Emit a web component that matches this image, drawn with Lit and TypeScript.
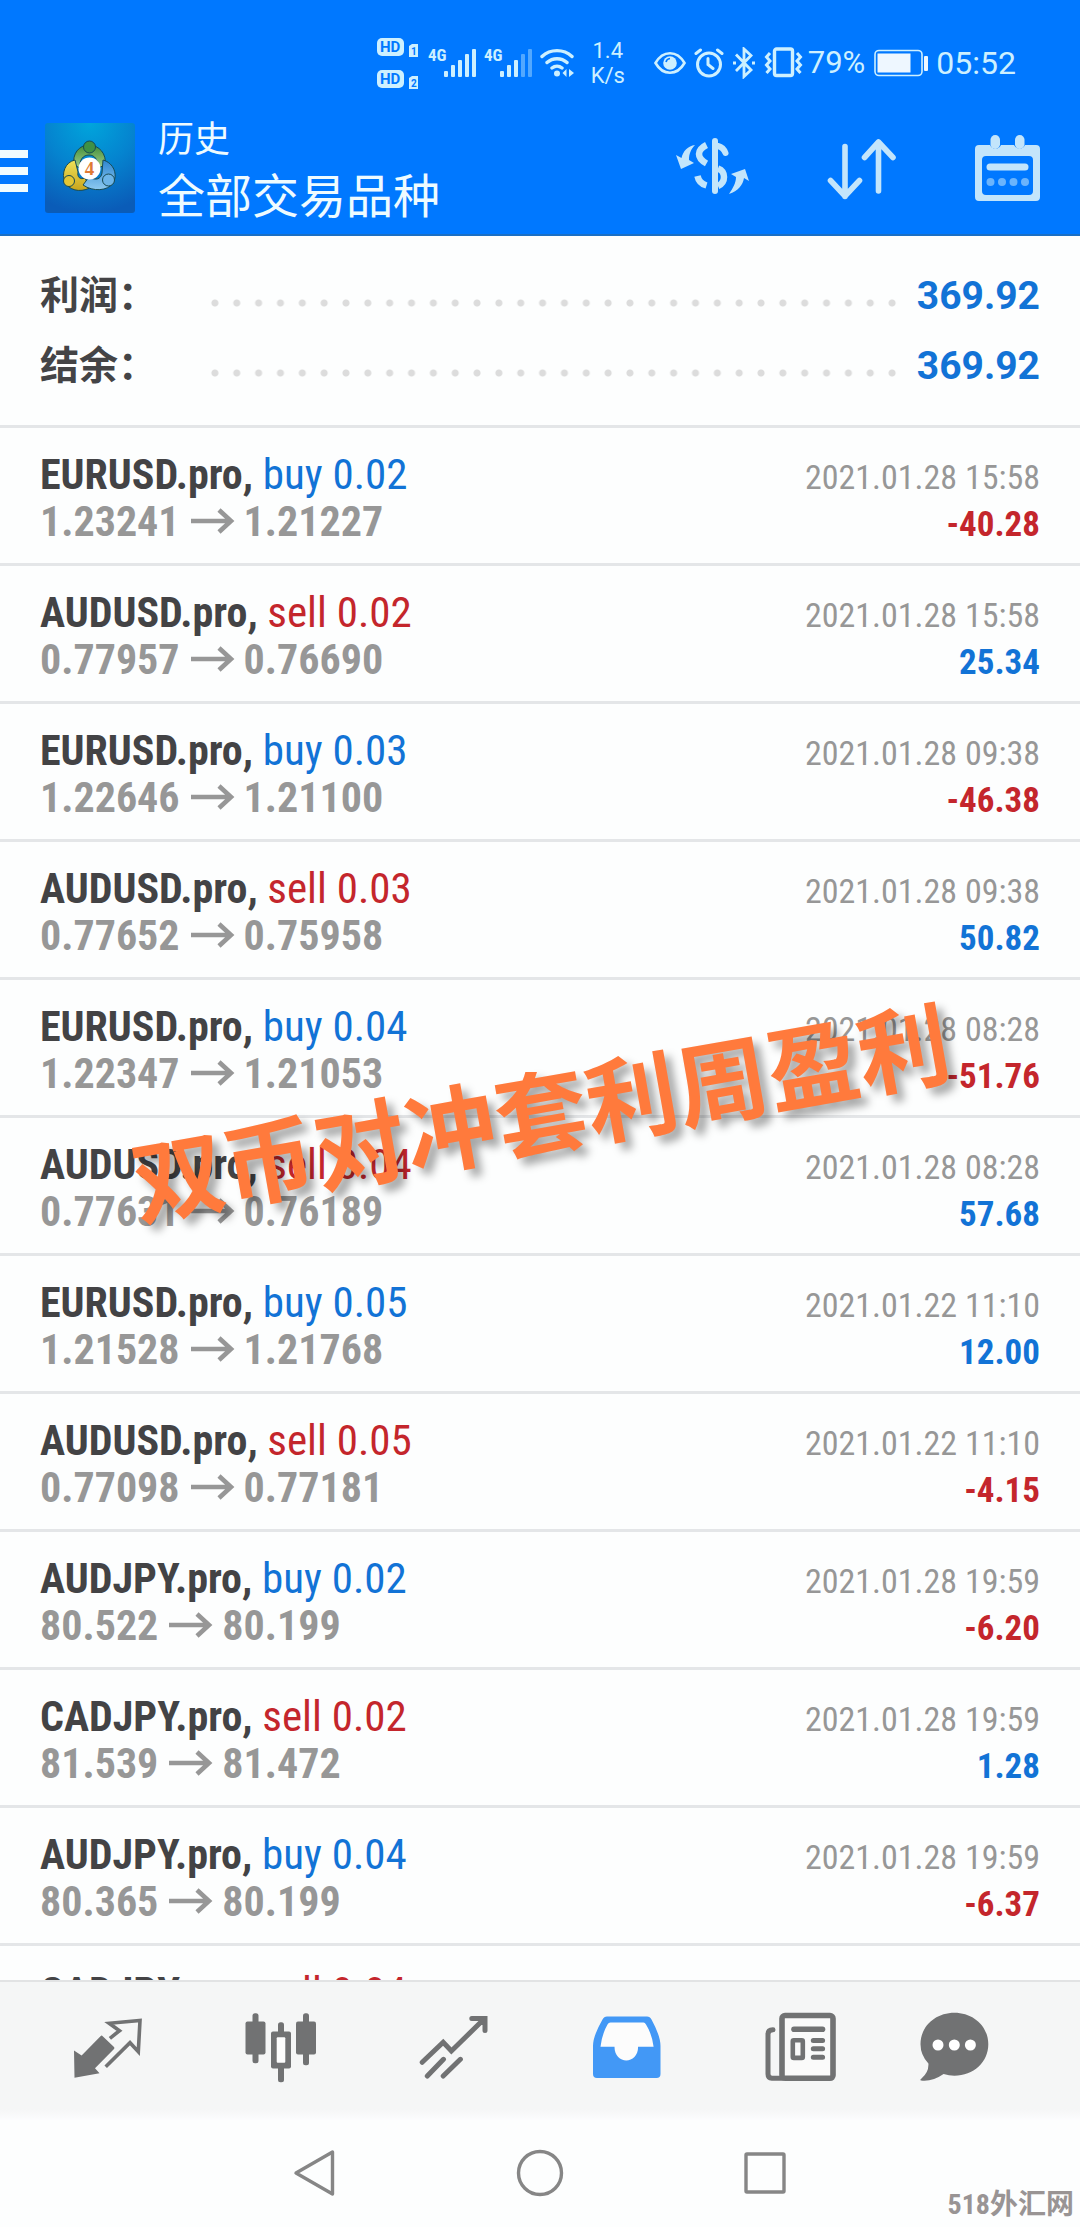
import { LitElement, html, css, svg, nothing } from "lit";
import { customElement, property } from "lit/decorators.js";
import { classMap } from "lit/directives/class-map.js";

type Side = "buy" | "sell";

interface Deal {
  symbol: string;
  side: Side;
  volume: string;
  open: string;
  close: string;
  time: string;
  profit: string;
}

const deal = (
  symbol: string,
  side: Side,
  volume: string,
  open: string,
  close: string,
  time: string,
  profit: string
): Deal => ({ symbol, side, volume, open, close, time, profit });

const DEALS: Deal[] = [
  deal("EURUSD.pro", "buy", "0.02", "1.23241", "1.21227", "2021.01.28 15:58", "-40.28"),
  deal("AUDUSD.pro", "sell", "0.02", "0.77957", "0.76690", "2021.01.28 15:58", "25.34"),
  deal("EURUSD.pro", "buy", "0.03", "1.22646", "1.21100", "2021.01.28 09:38", "-46.38"),
  deal("AUDUSD.pro", "sell", "0.03", "0.77652", "0.75958", "2021.01.28 09:38", "50.82"),
  deal("EURUSD.pro", "buy", "0.04", "1.22347", "1.21053", "2021.01.28 08:28", "-51.76"),
  deal("AUDUSD.pro", "sell", "0.04", "0.77631", "0.76189", "2021.01.28 08:28", "57.68"),
  deal("EURUSD.pro", "buy", "0.05", "1.21528", "1.21768", "2021.01.22 11:10", "12.00"),
  deal("AUDUSD.pro", "sell", "0.05", "0.77098", "0.77181", "2021.01.22 11:10", "-4.15"),
  deal("AUDJPY.pro", "buy", "0.02", "80.522", "80.199", "2021.01.28 19:59", "-6.20"),
  deal("CADJPY.pro", "sell", "0.02", "81.539", "81.472", "2021.01.28 19:59", "1.28"),
  deal("AUDJPY.pro", "buy", "0.04", "80.365", "80.199", "2021.01.28 19:59", "-6.37"),
  deal("CADJPY.pro", "sell", "0.04", "", "", "2021.01.28 19:58", ""),
];

@customElement("status-bar")
export class StatusBar extends LitElement {
  static styles = css`
    :host {
      display: flex;
      align-items: center;
      justify-content: flex-end;
      min-height: 78px;
      padding: 24px 64px 0 16px;
      color: #cdf0ff;
      font-family: Roboto, "Liberation Sans", sans-serif;
    }
    svg {
      display: block;
      flex: none;
    }
    .cluster {
      display: flex;
      align-items: center;
      gap: 8px;
    }
    .speed {
      display: flex;
      flex-direction: column;
      align-items: center;
      width: 32px;
      margin: 0 30px 0 17px;
      font-size: 22px;
      line-height: 25px;
    }
    .battery-level {
      margin: 0 9px 0 5px;
      font-size: 31px;
      line-height: 36px;
    }
    .clock {
      margin-left: 8px;
      font-size: 32px;
      line-height: 36px;
    }
    .badge-text {
      font: 700 15px Roboto, sans-serif;
      fill: #0078ff;
    }
    .badge-num {
      font: 700 10px Roboto, sans-serif;
      fill: #0078ff;
    }
    .net-text {
      font: 700 17px "Roboto Condensed", Roboto, sans-serif;
      fill: currentColor;
    }
  `;

  private hd(y: number, n: string) {
    return svg`
      <rect x="1" y=${y} width="27" height="18" rx="5" fill="currentColor"/>
      <text class="badge-text" x="4" y=${y + 14}>HD</text>
      <path d=${`M33 ${y + 8}l3-2h6v13h-9z`} fill="currentColor"/>
      <text class="badge-num" x="35" y=${y + 17}>${n}</text>`;
  }

  private signal(strength: number) {
    return html`<svg width="48" height="36" viewBox="0 -2 48 36" aria-hidden="true">
      <text class="net-text" x="0" y="14">4G</text>
      ${[6, 12, 17, 23, 28].map(
        (h, i) => svg`<rect x=${16 + i * 7} y=${30 - h} width="4" height=${h} rx="1"
          fill="currentColor" opacity=${i < strength ? 1 : 0.4}/>`
      )}
    </svg>`;
  }

  render() {
    return html`
      <div class="cluster">
        <svg width="44" height="54" viewBox="0 0 44 54" aria-hidden="true">
          ${this.hd(2, "1")} ${this.hd(34, "2")}
        </svg>
        ${this.signal(5)} ${this.signal(3)}
        <svg width="35" height="32" viewBox="0 0 35 32" fill="none" stroke="currentColor" stroke-width="3.4" stroke-linecap="round" aria-hidden="true">
          <path d="M2 9.500a22 22 0 0 1 30 0M7 15.500a15 15 0 0 1 20 0M12 21a8 8 0 0 1 10 0"/>
          <circle cx="17" cy="26.500" r="3" fill="currentColor" stroke="none"/>
          <path d="M26.500 22v8l-4-4zM29 22v8l5-4z" fill="currentColor" stroke="none"/>
        </svg>
      </div>
      <div class="speed"><span>1.4</span><span>K/s</span></div>
      <div class="cluster">
        <svg width="32" height="32" viewBox="0 0 32 32" fill="none" stroke="currentColor" stroke-width="2.600" aria-hidden="true">
          <path d="M1.500 16C9 3 23 3 30.500 16C23 29 9 29 1.500 16z"/>
          <circle cx="16" cy="16" r="6.800" fill="currentColor" stroke="none"/>
          <path d="M12 15a4.500 4.500 0 0 1 4-3.500" stroke="#0078ff" stroke-width="1.600"/>
        </svg>
        <svg width="30" height="32" viewBox="0 0 30 32" fill="none" stroke="currentColor" stroke-width="3" stroke-linecap="round" aria-hidden="true">
          <circle cx="15" cy="17.500" r="11.500"/>
          <path d="M14 11.500v6l5 4M2 6.500l4.500-3.500M28 6.500L23.500 3"/>
        </svg>
        <svg width="24" height="32" viewBox="0 0 24 32" fill="none" stroke="currentColor" stroke-width="2.800" aria-hidden="true">
          <path d="M4 7.500l15 15.500l-7 6.500V2l7 6.500L4 24"/>
          <path d="M1 16h3M20 16h3" stroke-width="3"/>
        </svg>
        <svg width="39" height="32" viewBox="0 0 39 32" fill="none" stroke="currentColor" aria-hidden="true">
          <rect x="10.500" y="2" width="18" height="26.500" rx="2" stroke-width="3.4"/>
          <path d="M6 6l-3.500 4l3.500 4l-3.500 4l3.500 4l-3.500 4M33 6l3.500 4l-3.500 4l3.500 4l-3.500 4l3.500 4" stroke-width="3"/>
        </svg>
      </div>
      <span class="battery-level">79%</span>
      <svg width="54" height="28" viewBox="0 0 54 28" aria-hidden="true">
        <rect x="1" y="1.500" width="47" height="25" rx="4" fill="none" stroke="currentColor" stroke-width="1.600"/>
        <rect x="3.500" y="4.500" width="33" height="19" fill="#eef7ff"/>
        <rect x="50" y="7" width="4" height="15" rx="1" fill="#eef7ff"/>
      </svg>
      <time class="clock">05:52</time>
    `;
  }
}

@customElement("history-header")
export class HistoryHeader extends LitElement {
  static styles = css`
    :host {
      display: flex;
      align-items: center;
      min-height: 132px;
      padding-right: 40px;
      border-bottom: 2px solid #1b6fc4;
      color: #eefbff;
      font-family: Roboto, "Noto Sans CJK SC", sans-serif;
    }
    svg {
      display: block;
    }
    button {
      flex: none;
      padding: 0;
      border: 0;
      background: none;
      color: #c3e5fb;
    }
    .menu {
      padding-top: 4px;
      color: #f1fcff;
    }
    .logo {
      flex: none;
      margin: 0 23px 0 17px;
    }
    .titles {
      flex: 1;
      min-width: 0;
      padding-top: 8px;
    }
    .caption,
    .title {
      margin: 0;
      font-weight: 400;
    }
    .caption {
      font-size: 36px;
      line-height: 50px;
    }
    .title {
      font-size: 47px;
      line-height: 64px;
    }
    .actions {
      display: flex;
      align-items: center;
      gap: 78px;
    }
    .digit {
      font: 700 19px "Liberation Serif", serif;
      fill: #e07a35;
    }
  `;

  render() {
    return html`
      <button class="menu" aria-label="菜单">
        <svg width="28" height="44" viewBox="0 0 28 44" fill="currentColor">
          <path d="M0 2h28v8H0zM0 19h28v8H0zM0 36h28v8H0z"/>
        </svg>
      </button>
      <svg class="logo" width="90" height="90" viewBox="0 0 90 90" aria-hidden="true">
        <defs>
          <radialGradient id="bg" cx=".5" cy="0" r="1">
            <stop offset="0" stop-color="#00a5dc"/>
            <stop offset=".5" stop-color="#0583cf"/>
            <stop offset="1" stop-color="#0a5cb8"/>
          </radialGradient>
          <linearGradient id="green" x2="0" y2="1">
            <stop offset="0" stop-color="#3f8c3a"/>
            <stop offset="1" stop-color="#a5cf88"/>
          </linearGradient>
          <linearGradient id="gold" x2="0" y2="1">
            <stop offset="0" stop-color="#f0e25a"/>
            <stop offset="1" stop-color="#c9a51c"/>
          </linearGradient>
          <linearGradient id="azure" x2="0" y2="1">
            <stop offset="0" stop-color="#2f86d0"/>
            <stop offset="1" stop-color="#8cc9f0"/>
          </linearGradient>
        </defs>
        <rect width="90" height="90" rx="3" fill="url(#bg)"/>
        <g stroke="#174a52" stroke-width="1">
          <path d="M29 42c-2-11 5-20 15-20s18 9 16 20l-7 3c0-8-3-13-9-13s-10 5-9 13z" fill="url(#green)"/>
          <path d="M30 37c-10 2-14 14-10 22s14 11 25 6l-5-10c-5 2-8-1-7-6z" fill="url(#gold)"/>
          <path d="M58 37c11 3 15 15 10 23s-20 9-30 2l6-8c7 4 12 2 13-4z" fill="url(#azure)"/>
          <circle cx="44.500" cy="24" r="6" fill="#3f9145"/>
          <circle cx="24" cy="58" r="5.500" fill="#e3c634"/>
          <circle cx="63.500" cy="57" r="6" fill="#6db5e8"/>
        </g>
        <circle cx="44.500" cy="45.500" r="11" fill="#fff"/>
        <text class="digit" x="44.500" y="52" text-anchor="middle">4</text>
      </svg>
      <div class="titles">
        <p class="caption">历史</p>
        <h1 class="title">全部交易品种</h1>
      </div>
      <div class="actions">
        <button aria-label="货币">
          <svg width="74" height="66" viewBox="0 0 74 66" fill="none" stroke="currentColor">
            <path d="M40 6v50" stroke-width="6" stroke-linecap="round"/>
            <path d="M43 11c4 1 6 3 7.500 7" stroke-width="6" stroke-linecap="round"/>
            <path d="M31.500 10c-10 5-10 13 0 18.500" stroke-width="6.500"/>
            <path d="M43 33.500c8 3 8 14 0 17.500" stroke-width="6.500"/>
            <path d="M22.500 41c1 5 4 8 9 9.500" stroke-width="6.500"/>
            <path d="M20 10c-7 1-12 6-13.500 13l-5.500-3l5 14l13-6l-5-3c0-6 1.500-10 6-15z" fill="currentColor" stroke="none"/>
            <path d="M54 59c9-3 14-9 15-16l5 3l-4-12l-14 5l5 3c0 6-3 11-7 17z" fill="currentColor" stroke="none"/>
          </svg>
        </button>
        <button aria-label="排序">
          <svg width="70" height="66" viewBox="0 0 70 66" fill="none" stroke="currentColor" stroke-width="5.600" stroke-linecap="round" stroke-linejoin="round">
            <path d="M18 11.500v50M3.500 45.500L18 61L32.500 45.500M51.500 56V7M37.500 22.500L51.500 7L66 22.500"/>
          </svg>
        </button>
        <button aria-label="日期">
          <svg width="65" height="68" viewBox="0 0 65 68" fill="currentColor">
            <path fill-rule="evenodd" d="M4 11h11a6 6 0 0 0 11 0h13a6 6 0 0 0 11 0h11a4 4 0 0 1 4 4v48a4 4 0 0 1-4 4H4a4 4 0 0 1-4-4V15a4 4 0 0 1 4-4zM11 22a4 4 0 0 0-4 4v31a4 4 0 0 0 4 4h43a4 4 0 0 0 4-4V26a4 4 0 0 0-4-4z"/>
            <rect x="15.500" y="1" width="9.500" height="14" rx="4.700"/>
            <rect x="40" y="1" width="9.500" height="14" rx="4.700"/>
            <rect x="11.500" y="29.500" width="42" height="7" rx="3.500"/>
            <g opacity=".55">
              <circle cx="15.500" cy="48" r="4"/><circle cx="27" cy="48" r="4"/>
              <circle cx="38.500" cy="48" r="4"/><circle cx="50" cy="48" r="4"/>
            </g>
          </svg>
        </button>
      </div>
    `;
  }
}

@customElement("history-summary")
export class HistorySummary extends LitElement {
  static styles = css`
    :host {
      display: block;
      padding: 25px 40px 24px;
      border-bottom: 3px solid #e4e6e8;
      font-family: Roboto, "Noto Sans CJK SC", sans-serif;
      font-weight: 700;
    }
    .list {
      margin: 0;
    }
    .line {
      display: flex;
      align-items: center;
      line-height: 70px;
    }
    .label {
      width: 164px;
      color: #444446;
      font-size: 39px;
    }
    .leader {
      flex: 1;
      height: 8px;
      margin: 14px 14px 0 0;
      background: radial-gradient(circle at center, #dcdcdc 3px, transparent 4px) 0 0 / 22px 8px round;
    }
    .value {
      margin: 0;
      color: #1273d6;
      font-size: 39px;
    }
  `;

  @property({ attribute: false }) lines: [string, string][] = [];

  render() {
    return html`<dl class="list">
      ${this.lines.map(
        ([label, value]) => html`<div class="line">
          <dt class="label">${label}：</dt>
          <span class="leader" role="presentation"></span>
          <dd class="value">${value}</dd>
        </div>`
      )}
    </dl>`;
  }
}

@customElement("deal-row")
export class DealRow extends LitElement {
  static styles = css`
    :host {
      display: block;
      padding: 22px 40px 17px;
      border-bottom: 3px solid #e4e6e8;
      font-family: "Roboto Condensed", "Liberation Sans Narrow", Roboto, sans-serif;
    }
    .line {
      display: flex;
      align-items: baseline;
      justify-content: space-between;
      height: 48px;
      line-height: 48px;
      white-space: nowrap;
    }
    .symbol {
      color: #434345;
      font-size: 42px;
      font-weight: 700;
    }
    .side {
      font-size: 43px;
      font-weight: 400;
    }
    .buy,
    .gain {
      color: #1273d6;
    }
    .sell,
    .loss {
      color: #c4262c;
    }
    .prices {
      display: flex;
      align-items: baseline;
      gap: 8px;
      color: #979797;
      font-size: 42px;
      font-weight: 700;
    }
    .arrow {
      align-self: center;
    }
    .time {
      color: #979797;
      font-size: 34px;
    }
    .profit {
      font-size: 35px;
      font-weight: 700;
    }
  `;

  @property({ attribute: false }) deal!: Deal;

  render() {
    const d = this.deal;
    const loss = d.profit.startsWith("-");
    return html`
      <div class="line">
        <span class="symbol"
          >${d.symbol}, <span class=${classMap({ side: true, [d.side]: true })}>${d.side} ${d.volume}</span></span
        >
        <time class="time">${d.time}</time>
      </div>
      ${d.open
        ? html`<div class="line">
            <span class="prices">
              <span>${d.open}</span>
              <svg class="arrow" width="48" height="28" viewBox="0 0 48 28" fill="none" stroke="currentColor" stroke-width="4.600" aria-label="至">
                <path d="M3 13h40M31 2l12 11l-12 11"/>
              </svg>
              <span>${d.close}</span>
            </span>
            <span class=${classMap({ profit: true, gain: !loss, loss })}>${d.profit}</span>
          </div>`
        : nothing}
    `;
  }
}

@customElement("tab-bar")
export class TabBar extends LitElement {
  static styles = css`
    :host {
      display: block;
      border-top: 2px solid #e2e3e4;
      background: linear-gradient(#f5f6f6 0 92%, #fcfcfe);
      color: #717273;
    }
    .tabs {
      display: grid;
      grid-template-columns: repeat(5, 173fr) 135fr;
      padding: 0 59px 0 21px;
    }
    .tab {
      display: flex;
      justify-content: center;
      padding: 30px 0 36px;
      color: inherit;
    }
    .active {
      color: #4298f6;
    }
    svg {
      display: block;
      flex: none;
    }
  `;

  private tabs = [
    {
      id: "quotes",
      label: "行情",
      icon: svg`
        <path d="M2 38.500L9.600 43.500L28.500 24.200a1.500 1.500 0 0 1 2.200 0L42 35a1.500 1.500 0 0 1 0 2L23 56.300L27.500 61.300L2.500 65.800z" fill="currentColor"/>
        <path d="M37.900 26.300L47.500 18.700L37.200 11.300L68 8.500L66.300 39.700L58 30.700L33.700 54.700" fill="none" stroke="currentColor" stroke-width="3.600"/>`,
    },
    {
      id: "charts",
      label: "图表",
      icon: svg`
        <g fill="currentColor">
          <rect x="7.500" y="1.300" width="6" height="50" rx="2.500"/><rect x=".5" y="9.500" width="20" height="33" rx="2"/>
          <rect x="33" y="10.300" width="6" height="60" rx="2.500"/><rect x="26" y="19.500" width="20" height="37" rx="2"/>
          <rect x="58" y="1.300" width="6" height="52" rx="2.500"/><rect x="51" y="9.500" width="20" height="33" rx="2"/>
        </g>
        <rect x="31.700" y="25.300" width="8.600" height="25.400" rx="1" fill="#fcfcfc"/>`,
    },
    {
      id: "trade",
      label: "交易",
      icon: svg`
        <path d="M4.200 50.300L25.200 30.300L33.400 39L65.800 7.300M53.800 6.500H67V18.500M25.500 47.300L9.300 64M42.400 47.300L25.200 64"
          fill="none" stroke="currentColor" stroke-width="5" stroke-linecap="round"/>`,
    },
    {
      id: "history",
      label: "历史",
      icon: svg`
        <path d="M16 4.500H56Q59 4.500 60.500 7.500Q69.500 24 69.500 34V62Q69.500 66 65.500 66H6Q2 66 2 62V34Q2 24 11.500 7.500Q13 4.500 16 4.500z" fill="currentColor"/>
        <path d="M19.500 10.500H52.500Q54 10.500 55 12.500Q61 22 62.600 34.700H47.100C47.100 53 23.500 53 23.500 34.700H9.500Q11 22 16.500 12.500Q17.500 10.500 19.500 10.500z" fill="#fcfcfc"/>`,
    },
    {
      id: "news",
      label: "新闻",
      icon: svg`
        <g fill="none" stroke="currentColor" stroke-linecap="round">
          <path d="M18 66.300H8Q4 66 4 62V22Q4 18 9 17.800" stroke-width="5"/>
          <rect x="18" y="3.500" width="51" height="62.800" rx="3" stroke-width="5.600" fill="#fafafa"/>
          <path d="M30 17.200H58.500" stroke-width="5.600"/>
          <rect x="28.800" y="28.300" width="10" height="17.600" rx="1" stroke-width="4.600"/>
          <path d="M49.300 28.600H58.600M49.300 36.800H58.600M49.300 45.200H58.600" stroke-width="5"/>
        </g>`,
    },
    {
      id: "chat",
      label: "消息",
      icon: svg`
        <path d="M36.400 .8C55.500 .8 70.300 14.500 70.300 32.200S55.500 63.700 36.400 63.700Q31 63.700 25.600 62Q14 70 3 68.500Q1.500 68 3.500 66.500Q11 60 10.400 51.500Q2.500 43 2.500 32.200C2.500 14.500 17.300 .8 36.400 .8z" fill="currentColor"/>
        <g fill="#fff"><circle cx="20" cy="33" r="5.500"/><circle cx="36.300" cy="33" r="5.500"/><circle cx="52.400" cy="33" r="5.500"/></g>`,
    },
  ];

  render() {
    return html`<nav class="tabs">
      ${this.tabs.map(
        (t) => html`<a
          class=${classMap({ tab: true, active: t.id === "history" })}
          href=${"#" + t.id}
          aria-label=${t.label}
          ><svg width="72" height="72" viewBox="0 0 72 72">${t.icon}</svg></a
        >`
      )}
    </nav>`;
  }
}

@customElement("system-nav")
export class SystemNav extends LitElement {
  static styles = css`
    :host {
      display: grid;
      grid-template-columns: repeat(3, 1fr);
      min-height: 105px;
      padding: 0 calc(100% * 3 / 16) 2px;
      color: #868686;
    }
    button {
      display: grid;
      place-items: center;
      padding: 0;
      border: 0;
      background: none;
      color: inherit;
    }
  `;

  render() {
    return html`
      <button aria-label="返回">
        <svg width="48" height="48" viewBox="0 0 48 48" fill="none" stroke="currentColor" stroke-width="3.400" stroke-linejoin="round">
          <path d="M41.500 3v42L5 24z"/>
        </svg>
      </button>
      <button aria-label="主屏幕">
        <svg width="48" height="48" viewBox="0 0 48 48" fill="none" stroke="currentColor" stroke-width="3.400">
          <circle cx="24" cy="24" r="21.500"/>
        </svg>
      </button>
      <button aria-label="最近任务">
        <svg width="48" height="48" viewBox="0 0 48 48" fill="none" stroke="currentColor" stroke-width="3.400">
          <rect x="5" y="5" width="38" height="38" rx="1"/>
        </svg>
      </button>
    `;
  }
}

@customElement("app-root")
export class AppRoot extends LitElement {
  static styles = css`
    :host {
      position: relative;
      display: flex;
      flex-direction: column;
      height: 100vh;
      overflow: hidden;
      background: #fdfefe;
    }
    .top {
      background: #0078ff;
    }
    .deals {
      flex: 1 1 0;
      min-height: 0;
      margin: 0;
      padding: 0;
      overflow: hidden;
      list-style: none;
    }
    .overlay {
      position: absolute;
      inset: 0 0 12px;
      display: grid;
      place-items: center;
      pointer-events: none;
    }
    .slogan {
      margin: 0;
      color: #ff7a3c;
      font: 700 92px / 1 "Noto Sans CJK SC", sans-serif;
      white-space: nowrap;
      text-shadow: 6px 8px 9px rgba(0, 0, 0, 0.35);
      transform: rotate(-10deg);
    }
    .mark {
      position: absolute;
      right: 6px;
      bottom: 4px;
      color: #999494;
      font: 700 28px / 36px "Roboto Condensed", "Noto Sans CJK SC", sans-serif;
    }
  `;

  render() {
    return html`
      <div class="top">
        <status-bar></status-bar>
        <history-header></history-header>
      </div>
      <history-summary .lines=${[["利润", "369.92"], ["结余", "369.92"]]}></history-summary>
      <ul class="deals">
        ${DEALS.map((d) => html`<li><deal-row .deal=${d}></deal-row></li>`)}
      </ul>
      <tab-bar></tab-bar>
      <system-nav></system-nav>
      <div class="overlay"><p class="slogan">双币对冲套利周盈利</p></div>
      <span class="mark">518外汇网</span>
    `;
  }
}
